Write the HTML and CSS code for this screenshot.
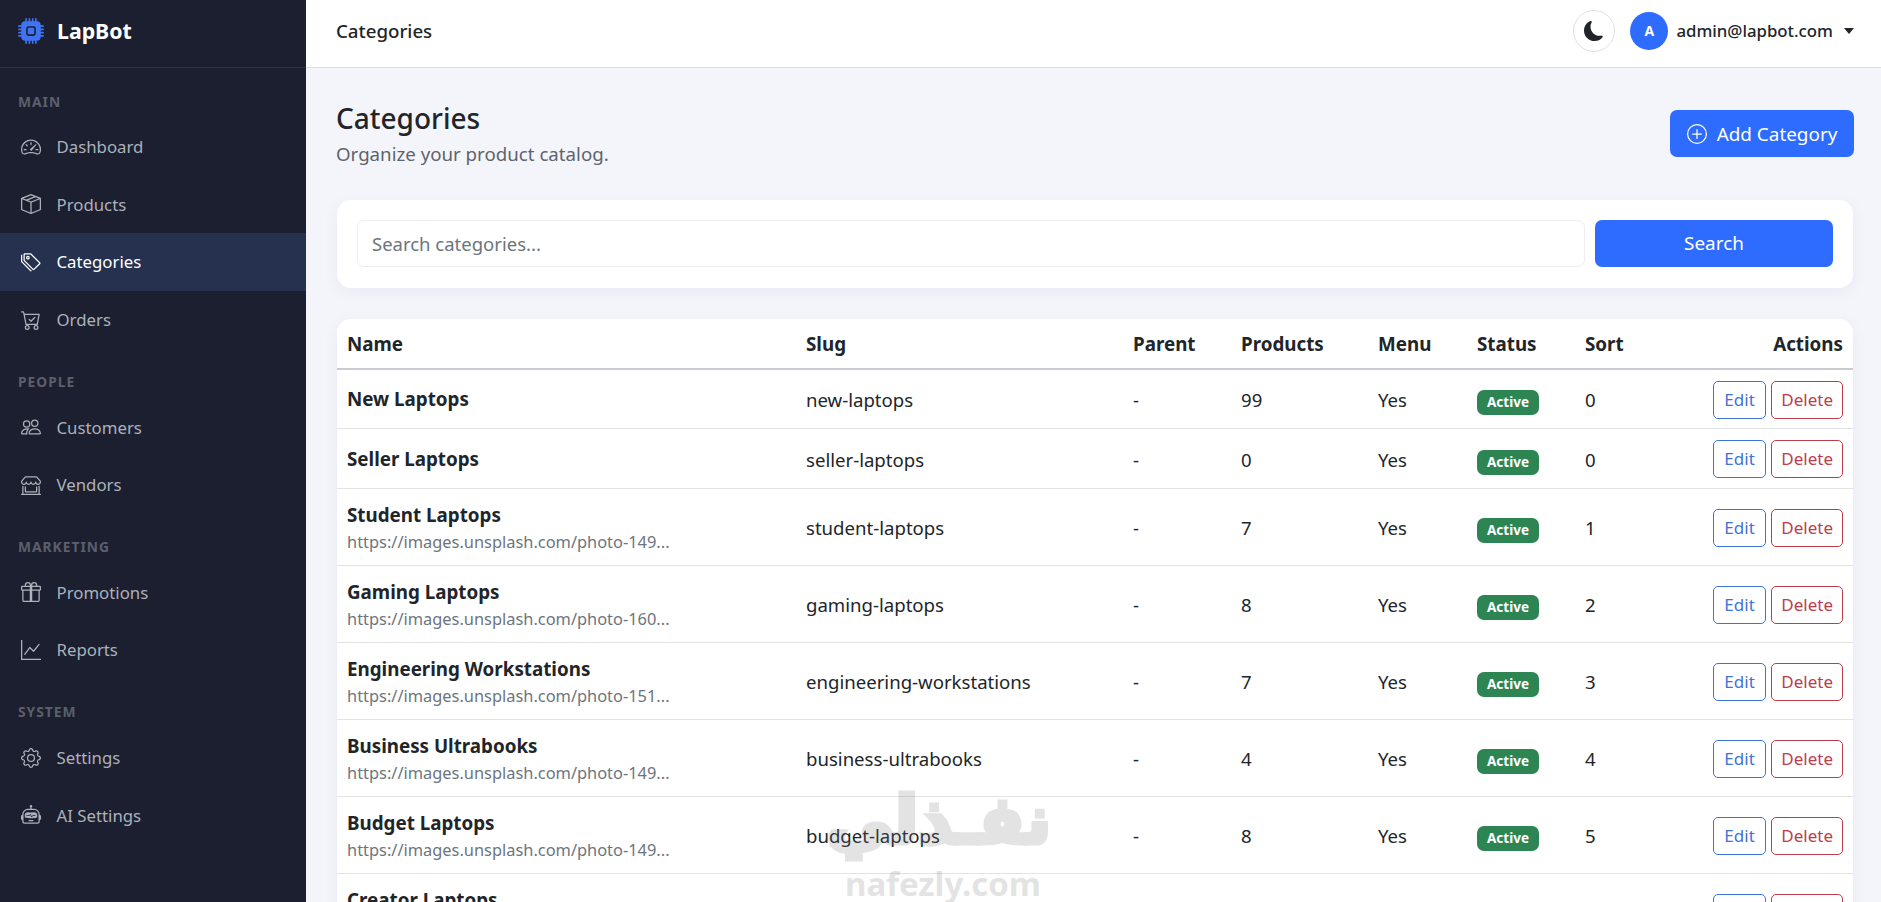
FILE: index.html
```html
<!DOCTYPE html>
<html>
<head>
<meta http-equiv="Content-Type" content="text/html; charset=UTF-8">
<title>Categories - LapBot</title>
<link rel="stylesheet" href="styles.css">
</head>
<body>
<svg class="icon-defs" xmlns="http://www.w3.org/2000/svg">
  <symbol id="i-cpu" viewBox="0 0 16 16"><path d="M6.5 6a.5.5 0 0 0-.5.5v3a.5.5 0 0 0 .5.5h3a.5.5 0 0 0 .5-.5v-3a.5.5 0 0 0-.5-.5h-3z"/><path d="M5.5.5a.5.5 0 0 0-1 0V2A2.5 2.5 0 0 0 2 4.5H.5a.5.5 0 0 0 0 1H2v1H.5a.5.5 0 0 0 0 1H2v1H.5a.5.5 0 0 0 0 1H2v1H.5a.5.5 0 0 0 0 1H2A2.5 2.5 0 0 0 4.5 14v1.5a.5.5 0 0 0 1 0V14h1v1.5a.5.5 0 0 0 1 0V14h1v1.5a.5.5 0 0 0 1 0V14h1v1.5a.5.5 0 0 0 1 0V14a2.5 2.5 0 0 0 2.5-2.5h1.5a.5.5 0 0 0 0-1H14v-1h1.5a.5.5 0 0 0 0-1H14v-1h1.5a.5.5 0 0 0 0-1H14v-1h1.5a.5.5 0 0 0 0-1H14A2.5 2.5 0 0 0 11.5 2V.5a.5.5 0 0 0-1 0V2h-1V.5a.5.5 0 0 0-1 0V2h-1V.5a.5.5 0 0 0-1 0V2h-1V.5zm1 4.5h3A1.5 1.5 0 0 1 11 6.5v3A1.5 1.5 0 0 1 9.5 11h-3A1.5 1.5 0 0 1 5 9.5v-3A1.5 1.5 0 0 1 6.5 5z"/></symbol>
  <symbol id="i-speed" viewBox="0 0 16 16"><path d="M8 4a.5.5 0 0 1 .5.5V6a.5.5 0 0 1-1 0V4.5A.5.5 0 0 1 8 4zM3.732 5.732a.5.5 0 0 1 .707 0l.915.914a.5.5 0 1 1-.708.708l-.914-.915a.5.5 0 0 1 0-.707zM2 10a.5.5 0 0 1 .5-.5h1.586a.5.5 0 0 1 0 1H2.5A.5.5 0 0 1 2 10zm9.5 0a.5.5 0 0 1 .5-.5h1.5a.5.5 0 0 1 0 1H12a.5.5 0 0 1-.5-.5zm.754-4.246a.389.389 0 0 0-.527-.02L7.547 9.31a.91.91 0 1 0 1.302 1.258l3.434-4.297a.389.389 0 0 0-.029-.518z"/><path fill-rule="evenodd" d="M0 10a8 8 0 1 1 15.547 2.661c-.442 1.253-1.845 1.602-2.932 1.25C11.309 13.488 9.475 13 8 13c-1.474 0-3.31.488-4.615.911-1.087.352-2.49.003-2.932-1.25A7.988 7.988 0 0 1 0 10zm8-7a7 7 0 0 0-6.603 9.329c.203.575.923.876 1.68.63C4.397 12.533 6.358 12 8 12s3.604.532 4.923.96c.757.245 1.477-.056 1.68-.631A7 7 0 0 0 8 3z"/></symbol>
  <symbol id="i-box" viewBox="0 0 16 16"><path d="M8.186 1.113a.5.5 0 0 0-.372 0L1.846 3.5l2.404.961L10.404 2l-2.218-.887zm3.564 1.426L5.596 5 8 5.961 14.154 3.5l-2.404-.961zm3.25 1.7-6.5 2.6v7.922l6.5-2.6V4.24zM7.5 14.762V6.838L1 4.239v7.925l6.5 2.6zM7.443.184a1.5 1.5 0 0 1 1.114 0l7.129 2.852A.5.5 0 0 1 16 3.5v8.662a1 1 0 0 1-.629.928l-7.185 2.874a.5.5 0 0 1-.372 0L.63 13.09a1 1 0 0 1-.63-.928V3.5a.5.5 0 0 1 .314-.464L7.443.184z"/></symbol>
  <symbol id="i-tags" viewBox="0 0 16 16"><path d="M3 2v4.586l7 7L14.586 9l-7-7H3zM2 2a1 1 0 0 1 1-1h4.586a1 1 0 0 1 .707.293l7 7a1 1 0 0 1 0 1.414l-4.586 4.586a1 1 0 0 1-1.414 0l-7-7A1 1 0 0 1 2 6.586V2z"/><path d="M5.5 5a.5.5 0 1 1 0-1 .5.5 0 0 1 0 1zm0 1a1.5 1.5 0 1 0 0-3 1.5 1.5 0 0 0 0 3zM1 7.086a1 1 0 0 0 .293.707L8.75 15.25l-.043.043a1 1 0 0 1-1.414 0l-7-7A1 1 0 0 1 0 7.586V3a1 1 0 0 1 1-1v5.086z"/></symbol>
  <symbol id="i-cart" viewBox="0 0 16 16"><path d="M11.354 6.354a.5.5 0 0 0-.708-.708L8 8.293 6.854 7.146a.5.5 0 1 0-.708.708l1.5 1.5a.5.5 0 0 0 .708 0l3-3z"/><path d="M.5 1a.5.5 0 0 0 0 1h1.11l.401 1.607 1.498 7.985A.5.5 0 0 0 4 12h1a2 2 0 1 0 0 4 2 2 0 0 0 0-4h7a2 2 0 1 0 0 4 2 2 0 0 0 0-4h1a.5.5 0 0 0 .491-.408l1.5-8A.5.5 0 0 0 14.5 3H2.89l-.405-1.621A.5.5 0 0 0 2 1H.5zm3.915 10L3.102 4h10.796l-1.313 7h-8.17zM6 14a1 1 0 1 1-2 0 1 1 0 0 1 2 0zm7 0a1 1 0 1 1-2 0 1 1 0 0 1 2 0z"/></symbol>
  <symbol id="i-people" viewBox="0 0 16 16"><path d="M15 14s1 0 1-1-1-4-5-4-5 3-5 4 1 1 1 1h8zm-7.978-1A.261.261 0 0 1 7 12.996c.001-.264.167-1.03.76-1.72C8.312 10.629 9.282 10 11 10c1.717 0 2.687.63 3.24 1.276.593.69.758 1.457.76 1.72l-.008.002a.274.274 0 0 1-.014.002H7.022zM11 7a2 2 0 1 0 0-4 2 2 0 0 0 0 4zm3-2a3 3 0 1 1-6 0 3 3 0 0 1 6 0zM6.936 9.28a5.88 5.88 0 0 0-1.23-.247A7.35 7.35 0 0 0 5 9c-4 0-5 3-5 4 0 .667.333 1 1 1h4.216A2.238 2.238 0 0 1 5 13c0-1.01.377-2.042 1.09-2.904.243-.294.526-.569.846-.816zM4.92 10A5.493 5.493 0 0 0 4 13H1c0-.26.164-1.03.76-1.724.545-.636 1.492-1.256 3.16-1.275zM1.5 5.5a3 3 0 1 1 6 0 3 3 0 0 1-6 0zm3-2a2 2 0 1 0 0 4 2 2 0 0 0 0-4z"/></symbol>
  <symbol id="i-shop" viewBox="0 0 16 16"><path d="M2.97 1.35A1 1 0 0 1 3.73 1h8.54a1 1 0 0 1 .76.35l2.609 3.044A1.5 1.5 0 0 1 16 5.37v.255a2.375 2.375 0 0 1-4.25 1.458A2.371 2.371 0 0 1 9.875 8 2.37 2.37 0 0 1 8 7.083 2.37 2.37 0 0 1 6.125 8a2.37 2.37 0 0 1-1.875-.917A2.375 2.375 0 0 1 0 5.625V5.37a1.5 1.5 0 0 1 .361-.976l2.61-3.045zm1.78 4.275a1.375 1.375 0 0 0 2.75 0 .5.5 0 0 1 1 0 1.375 1.375 0 0 0 2.75 0 .5.5 0 0 1 1 0 1.375 1.375 0 1 0 2.75 0V5.37a.5.5 0 0 0-.12-.325L12.27 2H3.73L1.12 5.045A.5.5 0 0 0 1 5.37v.255a1.375 1.375 0 0 0 2.75 0 .5.5 0 0 1 1 0zM1.5 8.5A.5.5 0 0 1 2 9v6h12V9a.5.5 0 0 1 1 0v6h.5a.5.5 0 0 1 0 1H.5a.5.5 0 0 1 0-1H1V9a.5.5 0 0 1 .5-.5zm2 .5a.5.5 0 0 1 .5.5V13h8V9.5a.5.5 0 0 1 1 0V13a1 1 0 0 1-1 1H4a1 1 0 0 1-1-1V9.5a.5.5 0 0 1 .5-.5z"/></symbol>
  <symbol id="i-gift" viewBox="0 0 16 16"><path d="M3 2.5a2.5 2.5 0 0 1 5 0 2.5 2.5 0 0 1 5 0v.006c0 .07 0 .27-.038.494H15a1 1 0 0 1 1 1v2a1 1 0 0 1-1 1v7.5a1.5 1.5 0 0 1-1.5 1.5h-11A1.5 1.5 0 0 1 1 14.5V7a1 1 0 0 1-1-1V4a1 1 0 0 1 1-1h2.038A2.968 2.968 0 0 1 3 2.506V2.5zm1.068.5H7v-.5a1.5 1.5 0 1 0-3 0c0 .085.002.274.045.43a.522.522 0 0 0 .023.07zM9 3h2.932a.56.56 0 0 0 .023-.07c.043-.156.045-.345.045-.43a1.5 1.5 0 0 0-3 0V3zM1 4v2h6V4H1zm8 0v2h6V4H9zm5 3H9v8h4.5a.5.5 0 0 0 .5-.5V7zm-7 8V7H2v7.5a.5.5 0 0 0 .5.5H7z"/></symbol>
  <symbol id="i-graph" viewBox="0 0 16 16"><path fill-rule="evenodd" d="M0 0h1v15h15v1H0V0Zm14.817 3.113a.5.5 0 0 1 .07.704l-4.5 5.5a.5.5 0 0 1-.74.037L7.06 6.767l-3.656 5.027a.5.5 0 0 1-.808-.588l4-5.5a.5.5 0 0 1 .758-.06l2.609 2.61 4.15-5.073a.5.5 0 0 1 .704-.07Z"/></symbol>
  <symbol id="i-gear" viewBox="0 0 16 16"><path d="M8 4.754a3.246 3.246 0 1 0 0 6.492 3.246 3.246 0 0 0 0-6.492zM5.754 8a2.246 2.246 0 1 1 4.492 0 2.246 2.246 0 0 1-4.492 0z"/><path d="M9.796 1.343c-.527-1.79-3.065-1.79-3.592 0l-.094.319a.873.873 0 0 1-1.255.52l-.292-.16c-1.64-.892-3.433.902-2.54 2.541l.159.292a.873.873 0 0 1-.52 1.255l-.319.094c-1.79.527-1.79 3.065 0 3.592l.319.094a.873.873 0 0 1 .52 1.255l-.16.292c-.892 1.64.901 3.434 2.541 2.54l.292-.159a.873.873 0 0 1 1.255.52l.094.319c.527 1.79 3.065 1.79 3.592 0l.094-.319a.873.873 0 0 1 1.255-.52l.292.16c1.64.893 3.434-.902 2.54-2.541l-.159-.292a.873.873 0 0 1 .52-1.255l.319-.094c1.79-.527 1.79-3.065 0-3.592l-.319-.094a.873.873 0 0 1-.52-1.255l.16-.292c.893-1.64-.902-3.433-2.541-2.54l-.292.159a.873.873 0 0 1-1.255-.52l-.094-.319zm-2.633.283c.246-.835 1.428-.835 1.674 0l.094.319a1.873 1.873 0 0 0 2.693 1.115l.291-.16c.764-.415 1.6.42 1.184 1.185l-.159.292a1.873 1.873 0 0 0 1.116 2.692l.318.094c.835.246.835 1.428 0 1.674l-.319.094a1.873 1.873 0 0 0-1.115 2.693l.16.291c.415.764-.42 1.6-1.185 1.184l-.291-.159a1.873 1.873 0 0 0-2.693 1.116l-.094.318c-.246.835-1.428.835-1.674 0l-.094-.319a1.873 1.873 0 0 0-2.692-1.115l-.292.16c-.764.415-1.6-.42-1.184-1.185l.159-.291A1.873 1.873 0 0 0 1.945 8.93l-.319-.094c-.835-.246-.835-1.428 0-1.674l.319-.094A1.873 1.873 0 0 0 3.06 4.377l-.16-.292c-.415-.764.42-1.6 1.185-1.184l.292.159a1.873 1.873 0 0 0 2.692-1.115l.094-.319z"/></symbol>
  <symbol id="i-robot" viewBox="0 0 16 16"><path d="M6 12.5a.5.5 0 0 1 .5-.5h3a.5.5 0 0 1 0 1h-3a.5.5 0 0 1-.5-.5ZM3 8.062C3 6.76 4.235 5.765 5.53 5.886a26.58 26.58 0 0 0 4.94 0C11.765 5.765 13 6.76 13 8.062v1.157a.933.933 0 0 1-.765.935c-.845.147-2.34.346-4.235.346-1.895 0-3.39-.2-4.235-.346A.933.933 0 0 1 3 9.219V8.062Zm4.542-.827a.25.25 0 0 0-.217.068l-.92.9a24.767 24.767 0 0 1-1.871-.183.25.25 0 0 0-.068.495c.55.076 1.232.149 2.02.193a.25.25 0 0 0 .189-.071l.754-.736.847 1.71a.25.25 0 0 0 .404.062l.932-.97a25.286 25.286 0 0 0 1.922-.188.25.25 0 0 0-.068-.495c-.538.074-1.207.145-1.98.189a.25.25 0 0 0-.166.076l-.754.785-.842-1.7a.25.25 0 0 0-.182-.135Z"/><path d="M8.5 1.866a1 1 0 1 0-1 0V3h-2A4.5 4.5 0 0 0 1 7.5V8a1 1 0 0 0-1 1v2a1 1 0 0 0 1 1v1a2 2 0 0 0 2 2h10a2 2 0 0 0 2-2v-1a1 1 0 0 0 1-1V9a1 1 0 0 0-1-1v-.5A4.5 4.5 0 0 0 10.5 3h-2V1.866ZM14 7.5V13a1 1 0 0 1-1 1H3a1 1 0 0 1-1-1V7.5A3.5 3.5 0 0 1 5.5 4h5A3.5 3.5 0 0 1 14 7.5Z"/></symbol>
  <symbol id="i-moon" viewBox="0 0 16 16"><path d="M6 .278a.768.768 0 0 1 .08.858 7.208 7.208 0 0 0-.878 3.46c0 4.021 3.278 7.277 7.318 7.277.527 0 1.04-.055 1.533-.16a.787.787 0 0 1 .81.316.733.733 0 0 1-.031.893A8.349 8.349 0 0 1 8.344 16C3.734 16 0 12.286 0 7.71 0 4.266 2.114 1.312 5.124.06A.752.752 0 0 1 6 .278z"/></symbol>
  <symbol id="i-plus" viewBox="0 0 16 16"><path d="M8 15A7 7 0 1 1 8 1a7 7 0 0 1 0 14zm0 1A8 8 0 1 0 8 0a8 8 0 0 0 0 16z"/><path d="M8 4a.5.5 0 0 1 .5.5v3h3a.5.5 0 0 1 0 1h-3v3a.5.5 0 0 1-1 0v-3h-3a.5.5 0 0 1 0-1h3v-3A.5.5 0 0 1 8 4z"/></symbol>
</svg>

<div class="layout">
  <aside class="sidebar">
    <div class="brand">
      <svg class="brand-icon"><use href="#i-cpu"/></svg>
      <span>LapBot</span>
    </div>
    <nav class="side-nav">
      <div class="nav-title">MAIN</div>
      <a class="nav-link"><svg class="nav-icon"><use href="#i-speed"/></svg>Dashboard</a>
      <a class="nav-link"><svg class="nav-icon"><use href="#i-box"/></svg>Products</a>
      <a class="nav-link active"><svg class="nav-icon"><use href="#i-tags"/></svg>Categories</a>
      <a class="nav-link"><svg class="nav-icon"><use href="#i-cart"/></svg>Orders</a>
      <div class="nav-title">PEOPLE</div>
      <a class="nav-link"><svg class="nav-icon"><use href="#i-people"/></svg>Customers</a>
      <a class="nav-link"><svg class="nav-icon"><use href="#i-shop"/></svg>Vendors</a>
      <div class="nav-title">MARKETING</div>
      <a class="nav-link"><svg class="nav-icon"><use href="#i-gift"/></svg>Promotions</a>
      <a class="nav-link"><svg class="nav-icon"><use href="#i-graph"/></svg>Reports</a>
      <div class="nav-title">SYSTEM</div>
      <a class="nav-link"><svg class="nav-icon"><use href="#i-gear"/></svg>Settings</a>
      <a class="nav-link"><svg class="nav-icon"><use href="#i-robot"/></svg>AI Settings</a>
    </nav>
  </aside>

  <div class="main">
    <header class="topbar">
      <div class="topbar-title">Categories</div>
      <div class="topbar-right">
        <button class="theme-btn"><svg class="moon-icon"><use href="#i-moon"/></svg></button>
        <div class="avatar">A</div>
        <div class="user-email">admin@lapbot.com</div>
        <div class="caret"></div>
      </div>
    </header>

    <main class="content">
      <div class="page-head">
        <div>
          <h1 class="page-title">Categories</h1>
          <p class="page-sub">Organize your product catalog.</p>
        </div>
        <button class="btn-primary btn-add"><svg class="plus-icon"><use href="#i-plus"/></svg>Add Category</button>
      </div>

      <form class="card search-card">
        <input class="search-input" type="text" placeholder="Search categories...">
        <button class="btn-primary btn-search" type="button">Search</button>
      </form>

      <div class="card table-card">
        <table class="cat-table">
          <colgroup>
            <col class="c-name"><col class="c-slug"><col class="c-parent"><col class="c-products"><col class="c-menu"><col class="c-status"><col class="c-sort"><col>
          </colgroup>
          <thead>
            <tr><th>Name</th><th>Slug</th><th>Parent</th><th>Products</th><th>Menu</th><th>Status</th><th>Sort</th><th class="right">Actions</th></tr>
          </thead>
          <tbody>
            <tr class="row-first">
              <td><div class="cat-name">New Laptops</div></td>
              <td>new-laptops</td><td>-</td><td>99</td><td>Yes</td><td><span class="badge">Active</span></td><td>0</td>
              <td class="right"><a class="btn-sm edit">Edit</a><a class="btn-sm del">Delete</a></td>
            </tr>
            <tr class="row-short">
              <td><div class="cat-name">Seller Laptops</div></td>
              <td>seller-laptops</td><td>-</td><td>0</td><td>Yes</td><td><span class="badge">Active</span></td><td>0</td>
              <td class="right"><a class="btn-sm edit">Edit</a><a class="btn-sm del">Delete</a></td>
            </tr>
            <tr>
              <td><div class="cat-name">Student Laptops</div><div class="cat-url">https://images.unsplash.com/photo-149...</div></td>
              <td>student-laptops</td><td>-</td><td>7</td><td>Yes</td><td><span class="badge">Active</span></td><td>1</td>
              <td class="right"><a class="btn-sm edit">Edit</a><a class="btn-sm del">Delete</a></td>
            </tr>
            <tr>
              <td><div class="cat-name">Gaming Laptops</div><div class="cat-url">https://images.unsplash.com/photo-160...</div></td>
              <td>gaming-laptops</td><td>-</td><td>8</td><td>Yes</td><td><span class="badge">Active</span></td><td>2</td>
              <td class="right"><a class="btn-sm edit">Edit</a><a class="btn-sm del">Delete</a></td>
            </tr>
            <tr>
              <td><div class="cat-name">Engineering Workstations</div><div class="cat-url">https://images.unsplash.com/photo-151...</div></td>
              <td>engineering-workstations</td><td>-</td><td>7</td><td>Yes</td><td><span class="badge">Active</span></td><td>3</td>
              <td class="right"><a class="btn-sm edit">Edit</a><a class="btn-sm del">Delete</a></td>
            </tr>
            <tr>
              <td><div class="cat-name">Business Ultrabooks</div><div class="cat-url">https://images.unsplash.com/photo-149...</div></td>
              <td>business-ultrabooks</td><td>-</td><td>4</td><td>Yes</td><td><span class="badge">Active</span></td><td>4</td>
              <td class="right"><a class="btn-sm edit">Edit</a><a class="btn-sm del">Delete</a></td>
            </tr>
            <tr>
              <td><div class="cat-name">Budget Laptops</div><div class="cat-url">https://images.unsplash.com/photo-149...</div></td>
              <td>budget-laptops</td><td>-</td><td>8</td><td>Yes</td><td><span class="badge">Active</span></td><td>5</td>
              <td class="right"><a class="btn-sm edit">Edit</a><a class="btn-sm del">Delete</a></td>
            </tr>
            <tr>
              <td><div class="cat-name">Creator Laptops</div><div class="cat-url">https://images.unsplash.com/photo-149...</div></td>
              <td>creator-laptops</td><td>-</td><td>6</td><td>Yes</td><td><span class="badge">Active</span></td><td>6</td>
              <td class="right"><a class="btn-sm edit">Edit</a><a class="btn-sm del">Delete</a></td>
            </tr>
          </tbody>
        </table>
      </div>
    </main>
  </div>
</div>

<div class="watermark">
  <div class="wm-ar" lang="ar" dir="rtl">نفـذلي</div>
  <div class="wm-en">nafezly.com</div>
</div>
</body>
</html>
```

FILE: styles.css
```css
* {
  box-sizing: border-box;
}
html, body {
  height: 100%;
}
body {
  margin: 0;
  overflow: hidden;
  font-family: "Noto Sans", "Open Sans", sans-serif;
  font-size: 18.7px;
  color: #212529;
  background-color: #f4f5fb;
}
.icon-defs {
  display: none;
}
.layout {
  display: flex;
  height: 902px;
}

/* sidebar */
.sidebar {
  width: 306px;
  flex-shrink: 0;
  background-color: #1b1f30;
  color: #adb1bb;
}
.brand {
  height: 68px;
  display: flex;
  align-items: center;
  gap: 13px;
  padding: 0 18px 6px;
  border-bottom: 1px solid #2d3242;
  color: #fff;
  font-size: 21.3px;
  font-weight: 700;
}
.brand-icon {
  width: 26px;
  height: 26px;
  fill: #3f73f2;
}
.nav-title {
  height: 24px;
  margin: 21px 0 5px;
  padding: 0 18px;
  display: flex;
  align-items: center;
  color: #5b5f6c;
  font-size: 13.8px;
  font-weight: 700;
  letter-spacing: 1px;
}
.nav-link {
  height: 57.6px;
  display: flex;
  align-items: center;
  gap: 15.5px;
  padding: 0 21px;
  font-size: 16.8px;
  color: #adb1bb;
}
.nav-link.active {
  background-color: #263150;
  color: #fff;
}
.nav-icon {
  width: 20px;
  height: 20px;
  fill: currentColor;
}

/* top bar */
.main {
  flex: 1;
  min-width: 0;
  display: flex;
  flex-direction: column;
}
.topbar {
  height: 68px;
  flex-shrink: 0;
  display: flex;
  align-items: center;
  justify-content: space-between;
  padding: 0 27px 6px 30px;
  background-color: #fff;
  border-bottom: 1px solid #dcdee4;
}
.topbar-title {
  font-size: 18.7px;
  font-weight: 500;
}
.topbar-right {
  display: flex;
  align-items: center;
}
.theme-btn {
  width: 42px;
  height: 42px;
  padding: 0;
  margin-right: 15px;
  display: flex;
  align-items: center;
  justify-content: center;
  background-color: #fff;
  border: 1px solid #dee2e6;
  border-radius: 50%;
}
.moon-icon {
  width: 20px;
  height: 20px;
  fill: #212529;
}
.avatar {
  width: 38px;
  height: 38px;
  margin-right: 8px;
  display: flex;
  align-items: center;
  justify-content: center;
  border-radius: 50%;
  background-color: #2d6cff;
  color: #fff;
  font-size: 14px;
  font-weight: 700;
}
.user-email {
  font-size: 16.8px;
  font-weight: 500;
}
.caret {
  margin-left: 11px;
  border-top: 6px solid #212529;
  border-left: 5px solid transparent;
  border-right: 5px solid transparent;
}

/* content */
.content {
  flex: 1;
  min-height: 0;
  overflow: hidden;
  padding: 32px 28px 0 30px;
}
.page-head {
  display: flex;
  justify-content: space-between;
  align-items: flex-start;
  margin-bottom: 33px;
}
.page-title {
  margin: 0;
  font-size: 28px;
  font-weight: 500;
  line-height: 36px;
}
.page-sub {
  margin: 5px 0 0;
  color: #5d646c;
  font-size: 18.7px;
  line-height: 26px;
}
.btn-primary {
  border: none;
  border-radius: 7px;
  background-color: #2d6cff;
  color: #fff;
  font-family: inherit;
  font-size: 18.9px;
}
.btn-add {
  height: 47px;
  margin-top: 10px;
  margin-right: -1px;
  width: 184px;
  display: flex;
  align-items: center;
  justify-content: center;
  gap: 10px;
}
.plus-icon {
  width: 20px;
  height: 20px;
  fill: #fff;
}
.card {
  margin-left: 1px;
  background-color: #fff;
  border-radius: 14px;
  box-shadow: 0 4px 16px rgba(30, 40, 80, 0.05);
}
.search-card {
  height: 88px;
  display: flex;
  align-items: center;
  gap: 10px;
  padding: 0 20px 2px;
  margin-bottom: 31px;
}
.search-input {
  flex: 1;
  min-width: 0;
  height: 47px;
  padding: 0 14px;
  border: 1px solid #eceef2;
  border-radius: 7px;
  font-family: inherit;
  font-size: 18.5px;
  color: #212529;
}
.search-input::placeholder {
  color: #6c757d;
}
.btn-search {
  width: 238px;
  height: 47px;
}

/* table */
.table-card {
  overflow: hidden;
}
.cat-table {
  width: 100%;
  table-layout: fixed;
  border-collapse: collapse;
  font-size: 18.6px;
}
.c-name { width: 459px; }
.c-slug { width: 327px; }
.c-parent { width: 108px; }
.c-products { width: 137px; }
.c-menu { width: 99px; }
.c-status { width: 108px; }
.c-sort { width: 108px; }
.cat-table th {
  height: 50px;
  padding: 0 10px;
  text-align: left;
  font-size: 18.8px;
  font-weight: 700;
  border-bottom: 2px solid #c9cbd0;
}
.cat-table td {
  height: 77px;
  padding: 2px 10px 0;
  vertical-align: middle;
  border-bottom: 1px solid #e1e3e7;
}
.cat-table .row-first td {
  height: 59px;
}
.cat-table .row-short td {
  height: 60px;
}
.cat-table th.right, .cat-table td.right {
  text-align: right;
}
.cat-name {
  font-size: 18.8px;
  font-weight: 700;
  line-height: 27px;
}
.cat-url {
  margin-top: 1px;
  color: #6c757d;
  font-size: 16.4px;
  line-height: 24px;
}
.badge {
  display: inline-block;
  padding: 0 10px;
  line-height: 25px;
  border-radius: 7px;
  background-color: #2e8554;
  color: #fff;
  font-size: 13.5px;
  font-weight: 700;
  vertical-align: -3px;
}
.btn-sm {
  display: inline-block;
  height: 38px;
  line-height: 35px;
  padding: 0 9px;
  margin-left: 5px;
  border: 1px solid;
  border-radius: 5px;
  font-size: 17px;
}
.edit {
  color: #3f73d9;
  border-color: #3f73d9;
  padding: 0 10.5px;
}
.del {
  color: #bc3d4c;
  border-color: #bc3d4c;
}

/* watermark on top of the screenshot */
.watermark {
  position: absolute;
  left: 835px;
  top: 778px;
  width: 216px;
  text-align: center;
  color: #787878;
  opacity: 0.2;
  pointer-events: none;
}
.wm-ar {
  font-family: "DejaVu Sans", sans-serif;
  font-size: 66px;
  font-weight: 700;
  line-height: 86px;
  white-space: nowrap;
  -webkit-text-stroke: 5px #787878;
}
.wm-en {
  font-family: "Noto Sans", sans-serif;
  font-size: 33px;
  font-weight: 700;
  line-height: 40px;
}
```
